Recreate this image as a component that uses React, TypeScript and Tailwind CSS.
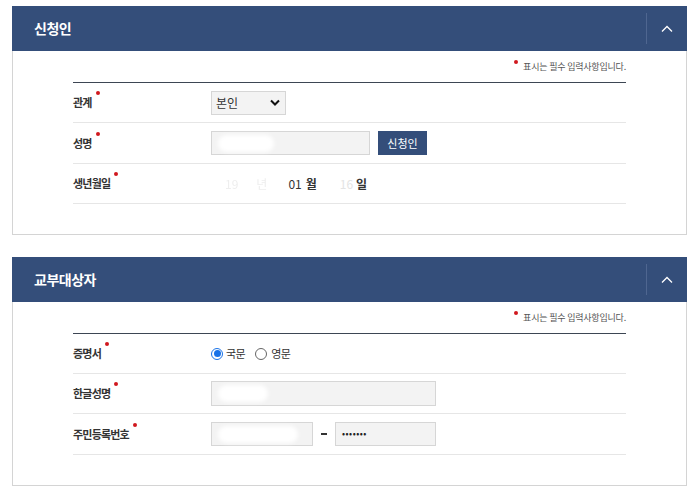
import { ReactNode } from "react";

const FONT = { fontFamily: '"Noto Sans CJK KR", "Noto Sans", sans-serif' };

function Dot() {
  return <span className="absolute -right-[8px] top-[-3px] w-[4px] h-[4px] rounded-full bg-[#d0181e]" />;
}

function Blob({ w }: { w: number }) {
  return (
    <span
      className="absolute left-[6px] top-[3px] h-[17px] rounded-full bg-white blur-[2px]"
      style={{ width: w }}
    />
  );
}

function Row({ label, children, h = "h-[40px]" }: { label: string; children: ReactNode; h?: string }) {
  return (
    <div className={`flex items-center ${h} border-b border-[#e6e6e6]`}>
      <div className="w-[138px] text-[11px] tracking-[-0.8px] font-semibold text-[#333]">
        <span className="relative">
          {label}
          <Dot />
        </span>
      </div>
      <div className="flex items-center">{children}</div>
    </div>
  );
}

function Panel({ title, children }: { title: string; children: ReactNode }) {
  return (
    <div className="w-[675px]">
      <div className="flex items-center h-[45px] bg-[#344e7a] pl-[22px]">
        <span className="flex-1 text-[14px] tracking-[-0.5px] font-bold text-white">{title}</span>
        <div className="flex items-center justify-center w-[41px] h-[31px] border-l border-[#4f6690]">
          <svg width="12" height="8" viewBox="0 0 12 8" className="mt-[1px]">
            <path d="M1 6.5 L6 1.5 L11 6.5" fill="none" stroke="#ffffff" strokeWidth="1.3" />
          </svg>
        </div>
      </div>
      <div className="border-x border-b border-[#d4d4d4] bg-white px-[60px] pb-[30px]">
        <div className="flex justify-end items-center h-[31px] pt-[1px]">
          <span className="relative text-[9px] tracking-[-0.2px] text-[#555] pl-[9px]">
            <span className="absolute left-0 top-[0px] w-[4px] h-[4px] rounded-full bg-[#d0181e]" />
            표시는 필수 입력사항입니다.
          </span>
        </div>
        <div className="border-t border-[#3d4653]">{children}</div>
      </div>
    </div>
  );
}

export default function App() {
  return (
    <div className="bg-white w-[694px] h-[496px] pl-[12px] pt-[6px]" style={FONT}>
      <Panel title="신청인">
        <Row label="관계">
          <div className="flex items-center justify-between w-[75px] h-[24px] border border-[#d6d6d6] bg-[#f3f3f3] pl-[4px] pr-[5px] text-[12px] text-[#333]">
            <span>본인</span>
            <svg width="10" height="7" viewBox="0 0 10 7">
              <path d="M1 1.5 L5 5.5 L9 1.5" fill="none" stroke="#111" strokeWidth="2" />
            </svg>
          </div>
        </Row>
        <Row label="성명" h="h-[41px]">
          <div className="relative w-[159px] h-[24px] border border-[#d6d6d6] bg-[#f3f3f3]">
            <Blob w={56} />
          </div>
          <div className="ml-[8px] flex items-center justify-center w-[49px] h-[24px] bg-[#344e7a] text-[11px] text-white">
            신청인
          </div>
        </Row>
        <Row label="생년월일">
          <div className="flex items-center text-[12px] text-[#333]">
            <span className="ml-[14px] text-[#eeeeee] blur-[0.5px]">19</span>
            <span className="ml-[18px] text-[#eeeeee] blur-[0.5px]">년</span>
            <span className="ml-[21px]">01</span>
            <span className="ml-[4px] font-semibold">월</span>
            <span className="ml-[23px] text-[#e4e4e4]">16</span>
            <span className="ml-[3px] font-semibold">일</span>
          </div>
        </Row>
      </Panel>
      <div className="h-[22px]" />
      <Panel title="교부대상자">
        <Row label="증명서">
          <div className="flex items-center text-[11px] tracking-[-0.5px] text-[#333]">
            <span className="flex items-center justify-center w-[12px] h-[12px] rounded-full border border-[#1a73e8]">
              <span className="w-[7px] h-[7px] rounded-full bg-[#1a73e8]" />
            </span>
            <span className="ml-[3px]">국문</span>
            <span className="ml-[10px] w-[12px] h-[12px] rounded-full border border-[#666]" />
            <span className="ml-[4px]">영문</span>
          </div>
        </Row>
        <Row label="한글성명">
          <div className="relative w-[225px] h-[25px] border border-[#d6d6d6] bg-[#f3f3f3]">
            <Blob w={50} />
          </div>
        </Row>
        <Row label="주민등록번호" h="h-[41px]">
          <div className="relative w-[102px] h-[24px] border border-[#d6d6d6] bg-[#f3f3f3]">
            <Blob w={80} />
          </div>
          <span className="mx-[8px] w-[6px] h-[2px] bg-[#333]" />
          <div className="flex items-center w-[101px] h-[24px] border border-[#d6d6d6] bg-[#f3f3f3] pl-[6px] text-[9px] tracking-[0.5px] text-[#222]">
            •••••••
          </div>
        </Row>
      </Panel>
    </div>
  );
}
